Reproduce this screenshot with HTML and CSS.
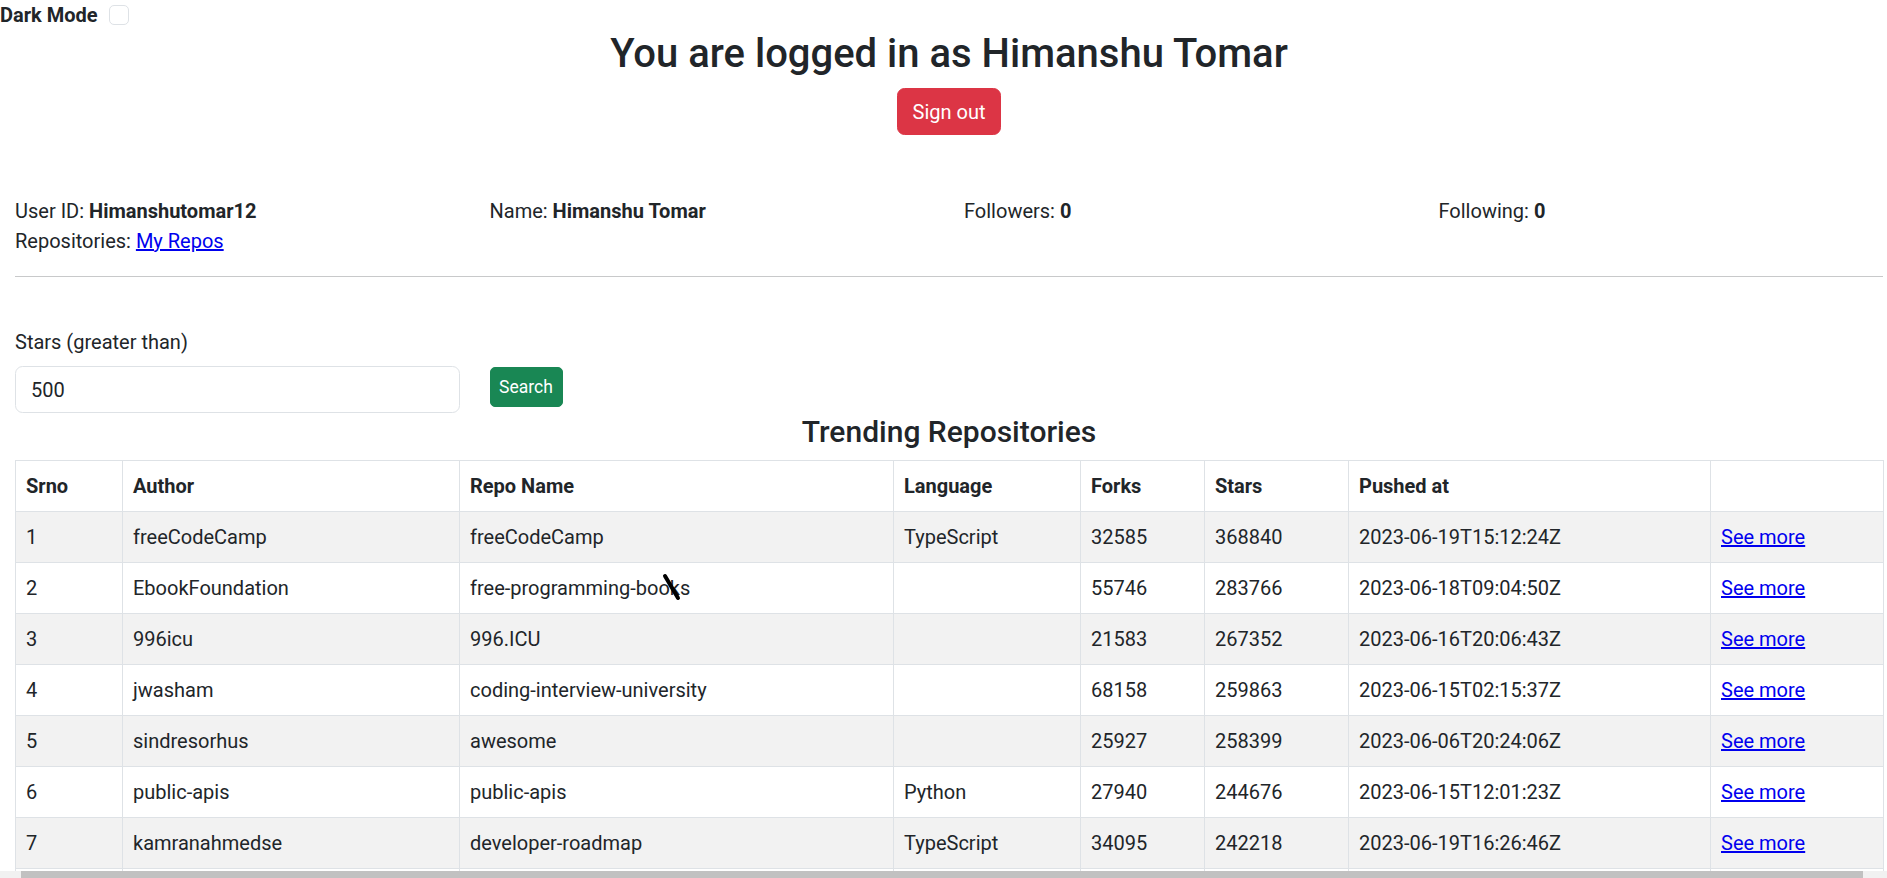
FILE: index.html
```html
<!DOCTYPE html>
<html lang="en">
<head>
<meta charset="utf-8">
<title>GitHub Trending</title>
<link rel="stylesheet" href="styles.css">
</head>
<body>
<div class="dark-toggle">
  <label class="dark-label" for="dm">Dark Mode</label>
  <input class="dark-check" type="checkbox" id="dm">
</div>
<div class="page">
  <h2 class="title">You are logged in as Himanshu Tomar</h2>
  <div class="center">
    <button class="btn btn-danger">Sign out</button>
  </div>
  <div class="info">
    <div class="cell">
      <div>User ID: <b>Himanshutomar12</b></div>
      <div>Repositories: <a href="#">My Repos</a></div>
    </div>
    <div class="cell">Name: <b>Himanshu Tomar</b></div>
    <div class="cell">Followers: <b>0</b></div>
    <div class="cell">Following: <b>0</b></div>
  </div>
  <hr class="rule">
  <div class="search-row">
    <div class="cell">
      <label class="form-label" for="stars">Stars (greater than)</label>
      <input class="form-control" id="stars" type="text" value="500">
    </div>
    <div class="cell">
      <button class="btn-search">Search</button>
    </div>
  </div>
  <h4 class="subtitle">Trending Repositories</h4>
  <table class="repo-table">
    <thead>
      <tr>
        <th class="c1">Srno</th>
        <th class="c2">Author</th>
        <th class="c3">Repo Name</th>
        <th class="c4">Language</th>
        <th class="c5">Forks</th>
        <th class="c6">Stars</th>
        <th class="c7">Pushed at</th>
        <th class="c8"></th>
      </tr>
    </thead>
    <tbody>
      <tr><td>1</td><td>freeCodeCamp</td><td>freeCodeCamp</td><td>TypeScript</td><td>32585</td><td>368840</td><td>2023-06-19T15:12:24Z</td><td><a href="#">See more</a></td></tr>
      <tr><td>2</td><td>EbookFoundation</td><td>free-programming-books</td><td></td><td>55746</td><td>283766</td><td>2023-06-18T09:04:50Z</td><td><a href="#">See more</a></td></tr>
      <tr><td>3</td><td>996icu</td><td>996.ICU</td><td></td><td>21583</td><td>267352</td><td>2023-06-16T20:06:43Z</td><td><a href="#">See more</a></td></tr>
      <tr><td>4</td><td>jwasham</td><td>coding-interview-university</td><td></td><td>68158</td><td>259863</td><td>2023-06-15T02:15:37Z</td><td><a href="#">See more</a></td></tr>
      <tr><td>5</td><td>sindresorhus</td><td>awesome</td><td></td><td>25927</td><td>258399</td><td>2023-06-06T20:24:06Z</td><td><a href="#">See more</a></td></tr>
      <tr><td>6</td><td>public-apis</td><td>public-apis</td><td>Python</td><td>27940</td><td>244676</td><td>2023-06-15T12:01:23Z</td><td><a href="#">See more</a></td></tr>
      <tr><td>7</td><td>kamranahmedse</td><td>developer-roadmap</td><td>TypeScript</td><td>34095</td><td>242218</td><td>2023-06-19T16:26:46Z</td><td><a href="#">See more</a></td></tr>
      <tr class="row-empty"><td></td><td></td><td></td><td></td><td></td><td></td><td></td><td></td></tr>
    </tbody>
  </table>
</div>
<svg class="cursor" width="24" height="32" viewBox="0 0 24 32" aria-hidden="true">
  <line x1="4" y1="4" x2="17" y2="26" stroke="#000" stroke-width="4" stroke-linecap="round"/>
</svg>
<div class="hscroll"><div class="hscroll-thumb"></div></div>
</body>
</html>
```
FILE: styles.css
```css
html, body {
  overflow: hidden;
}
body {
  margin: 0;
  font-family: Roboto, "Liberation Sans", sans-serif;
  font-size: 20px;
  line-height: 1.5;
  color: #212529;
  background: #fff;
}
a {
  color: #0000ee;
}
b {
  font-weight: 700;
}

.dark-toggle {
  display: flex;
  align-items: center;
  height: 30px;
}
.dark-label {
  font-weight: 700;
  font-size: 20px;
  line-height: 30px;
}
.dark-check {
  appearance: none;
  -webkit-appearance: none;
  width: 20px;
  height: 20px;
  margin: 0 0 0 11px;
  border: 1px solid #dee2e6;
  border-radius: 5px;
  background: #fff;
}

.page {
  width: 1898px;
  box-sizing: border-box;
  padding: 0 15px;
}

.title {
  margin: 0 0 10px;
  text-align: center;
  font-size: 40px;
  font-weight: 500;
  line-height: 48px;
}
.center {
  display: flex;
  justify-content: center;
}
.btn {
  font-family: inherit;
  font-size: 20px;
  line-height: 30px;
  padding: 7.5px 15px;
  border: 1px solid transparent;
  border-radius: 7.5px;
  color: #fff;
  white-space: nowrap;
}
.btn-danger {
  background: #dc3545;
  border-color: #dc3545;
  box-sizing: border-box;
  width: 104px;
  height: 47px;
  padding: 0;
}

.info {
  display: grid;
  grid-template-columns: repeat(4, 1fr);
  margin: 61px -15px 0;
}
.cell {
  padding: 0 15px;
}

.rule {
  margin: 20px 0 50px;
  border: 0;
  border-top: 1px solid #c8c9ca;
  height: 0;
}

.search-row {
  display: grid;
  grid-template-columns: repeat(4, 1fr);
  margin: 0 -15px;
}
.form-label {
  display: block;
  margin-bottom: 9px;
  line-height: 30px;
}
.form-control {
  display: block;
  box-sizing: border-box;
  width: 100%;
  height: 47px;
  padding: 7.5px 15px;
  font-family: inherit;
  font-size: 20px;
  line-height: 30px;
  color: #212529;
  border: 1px solid #dee2e6;
  border-radius: 7.5px;
  background: #fff;
}
.btn-search {
  margin-top: 40px;
  height: 40px;
  width: 73px;
  padding: 0;
  font-family: inherit;
  font-size: 17.5px;
  line-height: 26px;
  color: #fff;
  background: #198754;
  border: 1px solid #198754;
  border-radius: 5px;
}

.subtitle {
  margin: 1px 0 10px;
  text-align: center;
  font-size: 30px;
  font-weight: 500;
  line-height: 36px;
}

.repo-table {
  width: 1868px;
  border-collapse: collapse;
  table-layout: fixed;
}
.repo-table th,
.repo-table td {
  box-sizing: border-box;
  border: 1px solid #dee2e6;
  padding: 10px;
  line-height: 30px;
  text-align: left;
  vertical-align: top;
  white-space: nowrap;
}
.repo-table th {
  font-weight: 700;
  background: #fff;
}
.repo-table tbody tr:nth-child(odd) td {
  background: #f2f2f2;
}
.repo-table .row-empty td {
  height: 51px;
  background: #fff;
}
.c1 { width: 107px; }
.c2 { width: 337px; }
.c3 { width: 434px; }
.c4 { width: 187px; }
.c5 { width: 124px; }
.c6 { width: 144px; }
.c7 { width: 362px; }
.c8 { width: 173px; }

.cursor {
  position: absolute;
  left: 661px;
  top: 572px;
}

.hscroll {
  position: fixed;
  left: 0;
  right: 0;
  bottom: 0;
  height: 7px;
  background: #f1f1f1;
  display: flex;
}
.hscroll-thumb {
  margin-left: 21px;
  width: 1842px;
  background: #c1c1c1;
}
```
